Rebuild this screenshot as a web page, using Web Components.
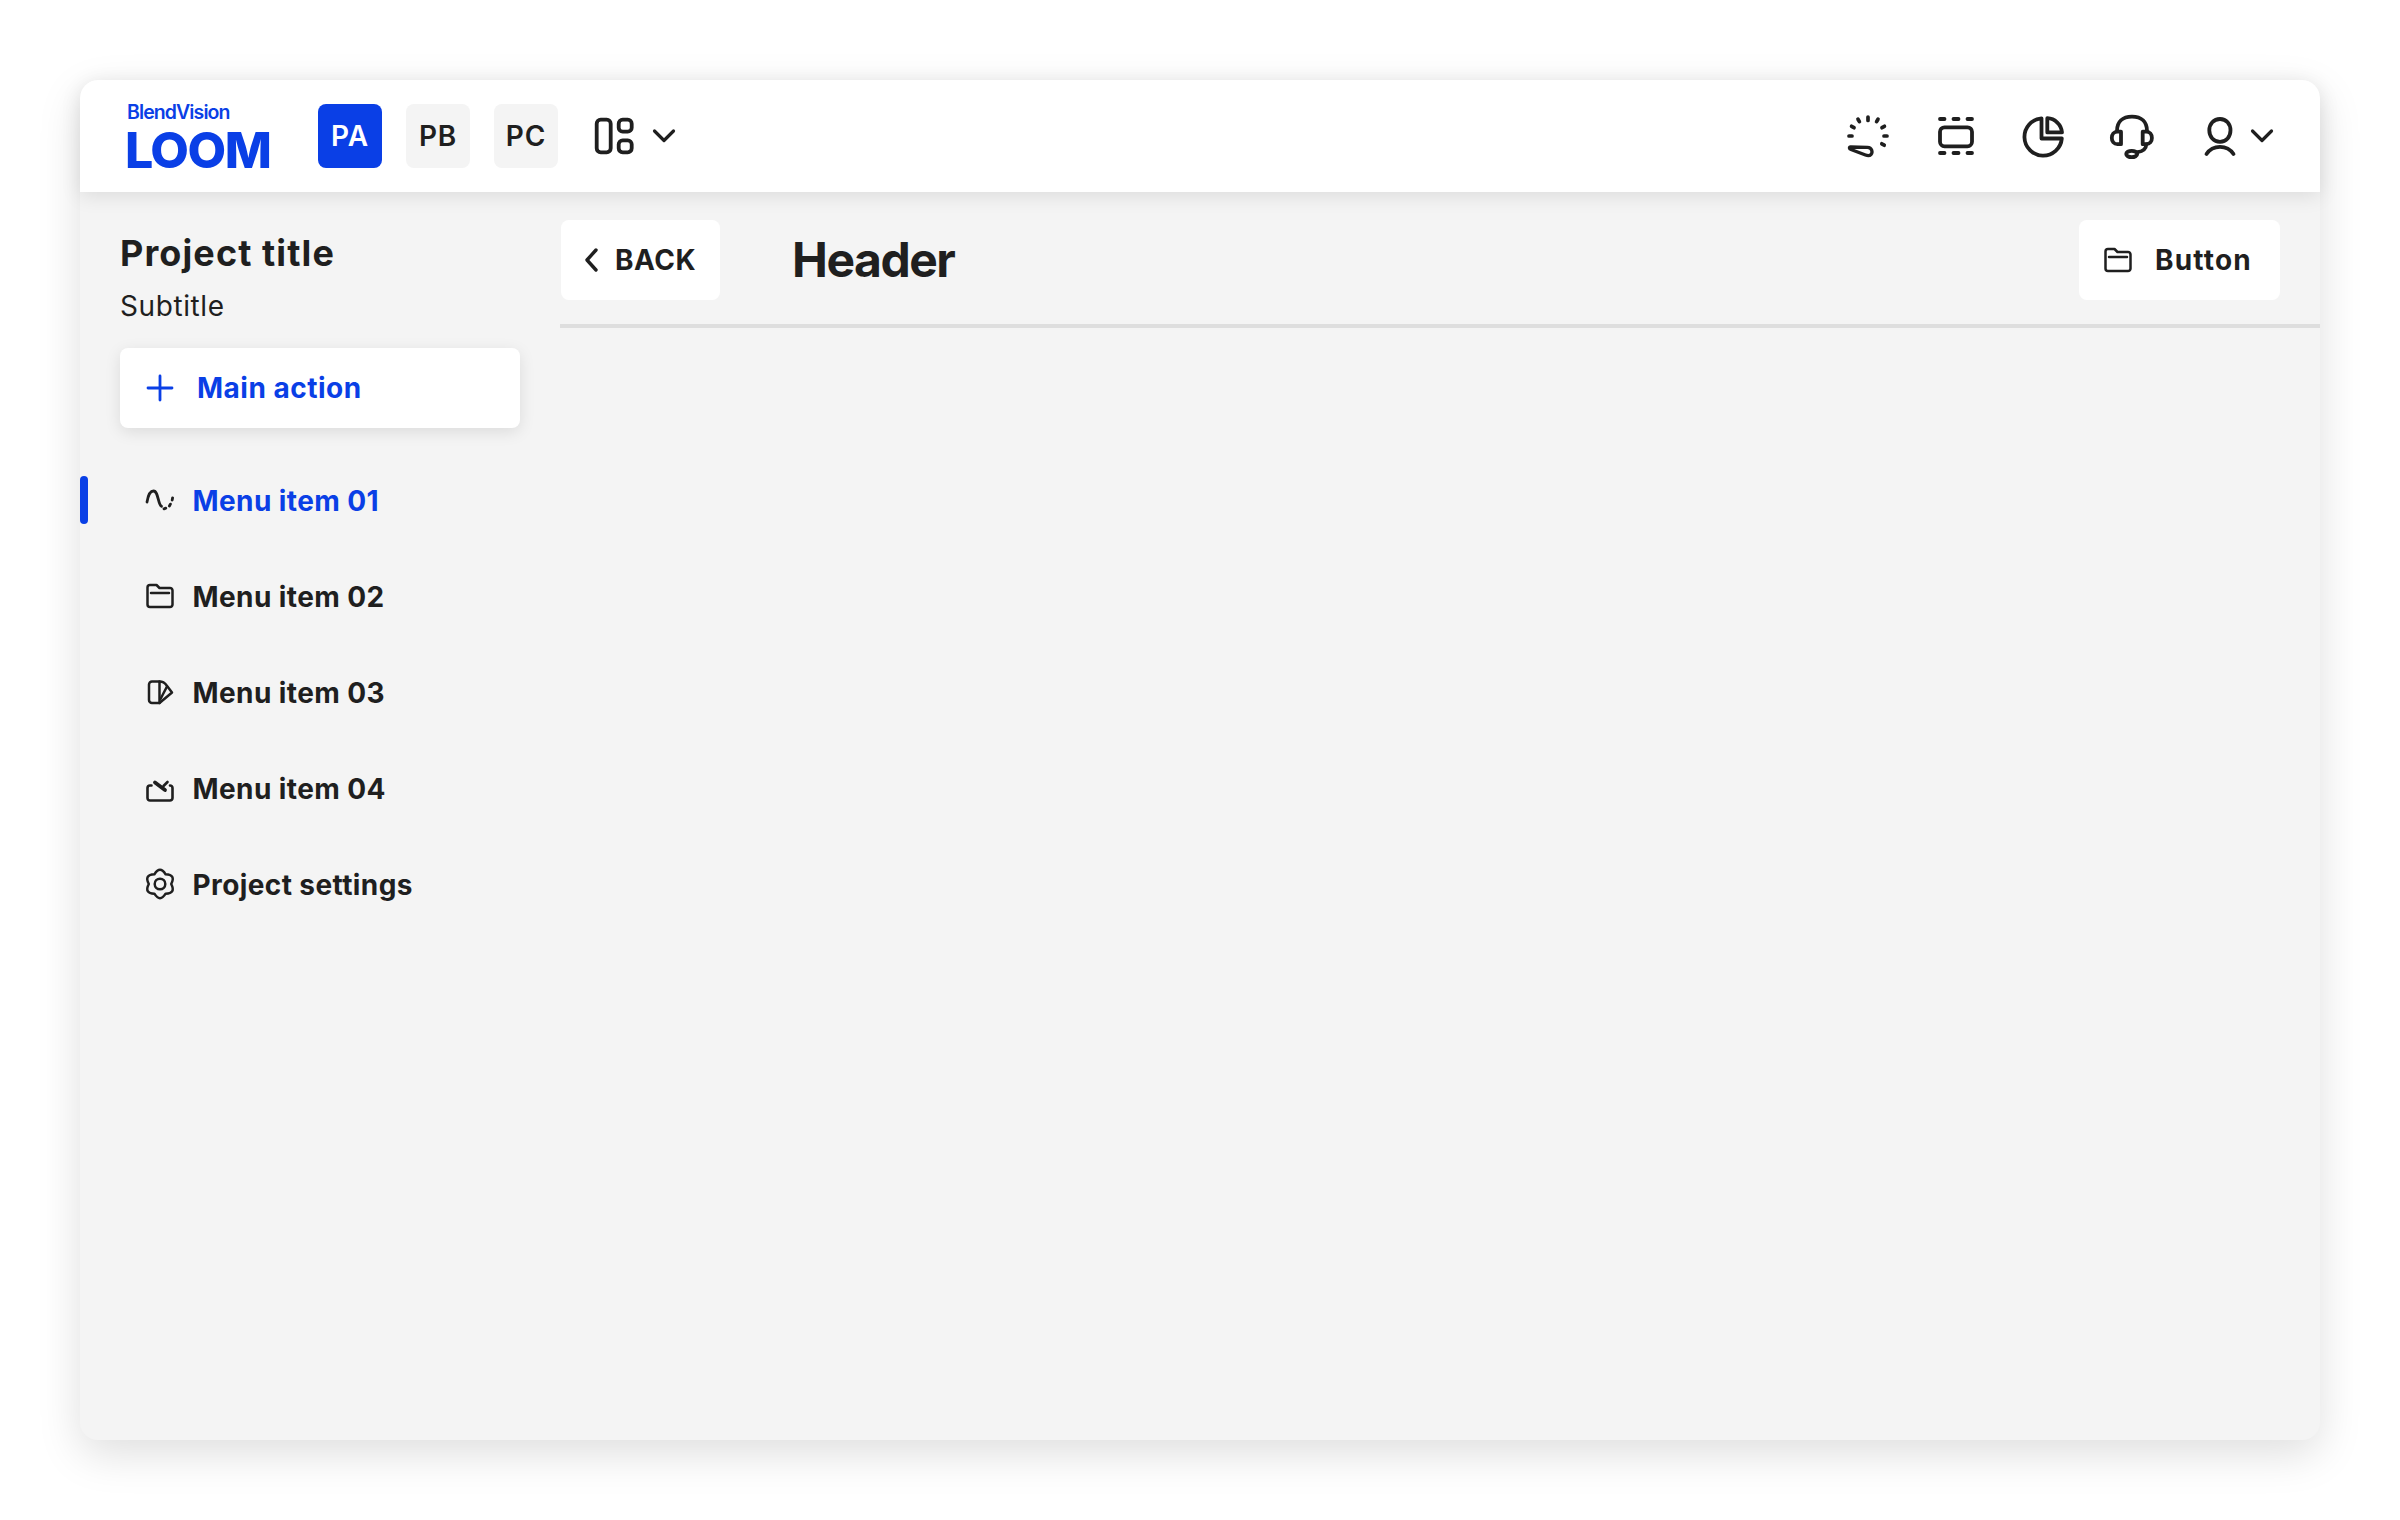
<!DOCTYPE html>
<html lang="en">
<head>
<meta charset="utf-8">
<title>BlendVision Loom</title>
<style>
  html, body { margin: 0; background: #fff; }
  body { padding: 80px; font-family: Inter, "Liberation Sans", sans-serif; color: #1f1f1f; }
</style>
</head>
<body>
<lm-app>
  <lm-topbar slot="top">
    <lm-logo slot="logo"></lm-logo>
    <lm-project slot="projects" active>PA</lm-project>
    <lm-project slot="projects">PB</lm-project>
    <lm-project slot="projects">PC</lm-project>
    <lm-icon slot="projects" name="layout" size="48" class="after"></lm-icon>
    <lm-icon slot="projects" name="chevron" size="24"></lm-icon>
    <lm-icon slot="tools" name="gauge" size="48"></lm-icon>
    <lm-icon slot="tools" name="frames" size="48"></lm-icon>
    <lm-icon slot="tools" name="pie" size="48"></lm-icon>
    <lm-icon slot="tools" name="headset" size="48"></lm-icon>
    <lm-icon slot="tools" name="user" size="48"></lm-icon>
    <lm-icon slot="end" name="chevron" size="24"></lm-icon>
  </lm-topbar>
  <lm-sidebar slot="side" heading="Project title" subtitle="Subtitle">
    <lm-main-action slot="action">Main action</lm-main-action>
    <lm-nav-item icon="wave" active>Menu item 01</lm-nav-item>
    <lm-nav-item icon="folder">Menu item 02</lm-nav-item>
    <lm-nav-item icon="fan">Menu item 03</lm-nav-item>
    <lm-nav-item icon="meter">Menu item 04</lm-nav-item>
    <lm-nav-item icon="gear">Project settings</lm-nav-item>
  </lm-sidebar>
  <lm-content slot="main">
    <lm-button slot="back" icon="back" kind="back">BACK</lm-button>
    <span slot="title">Header</span>
    <lm-button slot="actions" icon="folder">Button</lm-button>
  </lm-content>
</lm-app>

<script>
// scalloped outline for the settings gear
function gearPath() {
  const pt = (r, deg) => {
    const a = deg * Math.PI / 180;
    return (16 + r * Math.cos(a)).toFixed(2) + ' ' + (16 + r * Math.sin(a)).toFixed(2);
  };
  let d = 'M' + pt(11.2, -60);
  for (let i = 0; i < 6; i++) {
    d += 'Q' + pt(18.6, -30 + i * 60) + ' ' + pt(11.2, i * 60);
  }
  return d + 'Z';
}

const ICONS = {
  chevron: { box: 24, sw: 3.2, svg: '<path d="M2.500 7 12 16.500 21.500 7"/>' },
  back: { box: 32, sw: 3.4, svg: '<path d="M20 6 11 16l9 10"/>' },
  plus: { box: 32, sw: 2.8, svg: '<path d="M16 4v24M4 16h24"/>' },
  layout: { box: 48, sw: 3.8, svg: '<rect x="6.700" y="7.700" width="14" height="32.600" rx="4"/><rect x="28.700" y="7.700" width="13" height="12" rx="4"/><rect x="28.700" y="28.300" width="13" height="12" rx="4"/>' },
  gauge: { box: 48, sw: 3.7, svg: '<path d="M5 24h3M7.600 14.300l2.400 1.400M14 7.200l1.400 2.400M24 5v3.400M34 7.200l-1.400 2.400M40.400 14.300l-2.400 1.400M40 24h3M37.800 31.800l2.400 1.400"/><path stroke-width="3.300" d="M6.500 35l17 .3c4.500.2 5.500 4.700 3.500 7.200-1.500 1.500-3.500 1.300-5.500.5L7 37.500C5 36.700 5 35 6.500 35z"/>' },
  frames: { box: 48, sw: 3.8, svg: '<rect x="8" y="15.300" width="32" height="19" rx="4.500"/><path stroke-width="3.800" d="M8 7h4.500M21.500 7h5M35.500 7H40M8 41h4.500M21.500 41h5M35.500 41H40"/>' },
  pie: { box: 48, sw: 3.8, svg: '<path d="M21.500 6.300A18.700 18.700 0 1 0 41.800 26.500H21.500z"/><path d="M27.300 6.200A15.500 15.500 0 0 1 42 20.400H27.300z"/>' },
  headset: { box: 48, sw: 3.8, svg: '<path d="M9 19c0-9 5.500-14.300 15-14.300S39 10 39 19"/><path d="M9.500 19.700H13v12.500H9.500c-3.600 0-5.700-2.800-5.700-6.200s2.100-6.300 5.700-6.300zM34.700 19.700h3.500c3.600 0 5.700 2.900 5.700 6.300s-2.100 6.200-5.700 6.200h-3.500z"/><path d="M38.300 32.500c-.3 4.800-3 6.800-8.800 7.700"/><ellipse cx="23.700" cy="42" rx="5.500" ry="3.200"/>' },
  user: { box: 48, sw: 3.8, svg: '<path d="M24 7c6.300 0 10.500 4.800 10.500 11.300S30.300 29.800 24 29.800 13.300 24.800 13.300 18.300 17.700 7 24 7z"/><path d="M10.500 42c3-4.500 8-7.200 13.500-7.200s10.500 2.700 13.500 7.200"/>' },
  wave: { box: 32, sw: 2.8, svg: '<path d="M3 18c1-6 3.400-11 6.500-11 5 0 4.300 13.500 8 15.300"/><path d="M20 24.800l1.800-.6M25.400 22l1-1.900M28.200 16l.4-2.200"/>' },
  folder: { box: 32, sw: 2.5, svg: '<path d="M3.500 7.500A2.500 2.500 0 0 1 6 5h6.500l3 3H26a2.500 2.500 0 0 1 2.500 2.500v14A2.500 2.500 0 0 1 26 27H6a2.500 2.500 0 0 1-2.500-2.500z"/><path d="M7 13h18"/>' },
  fan: { box: 32, sw: 2.5, svg: '<path d="M8 5.500h7.500V27H8a3 3 0 0 1-3-3V8.500a3 3 0 0 1 3-3z"/><path d="M15.500 5.500c3.500 0 5.500 1.500 7 3.700l5.500 7.300-12.500 10.500"/><path d="M16.500 23l6.500-12.500"/>' },
  meter: { box: 32, sw: 2.6, svg: '<path d="M7.500 13.500H6A2.500 2.500 0 0 0 3.500 16v10A2.500 2.500 0 0 0 6 28.500h20a2.500 2.500 0 0 0 2.500-2.500V16a2.500 2.500 0 0 0-2.500-2.500"/><path stroke-width="3.800" d="M11 10.500l10 7.500"/><path stroke-width="2.600" d="M23.500 10l-4 4"/>' },
  gear: { box: 32, sw: 2.5, svg: '<path d="' + gearPath() + '"/><circle cx="16" cy="16" r="5.300"/>' }
};

const iconTpl = document.createElement('template');
iconTpl.innerHTML = `
  <style>
    :host { display: inline-flex; flex: none; }
    svg { display: block; fill: none; stroke: currentColor; stroke-linecap: round; stroke-linejoin: round; }
  </style>
  <svg aria-hidden="true"></svg>`;

class LmIcon extends HTMLElement {
  connectedCallback() {
    if (!this.shadowRoot) {
      this.attachShadow({ mode: 'open' }).appendChild(iconTpl.content.cloneNode(true));
    }
    const ico = ICONS[this.getAttribute('name')];
    if (!ico) return;
    const size = this.getAttribute('size') || ico.box;
    const svg = this.shadowRoot.querySelector('svg');
    svg.setAttribute('viewBox', `0 0 ${ico.box} ${ico.box}`);
    svg.setAttribute('width', size);
    svg.setAttribute('height', size);
    svg.setAttribute('stroke-width', ico.sw);
    svg.innerHTML = ico.svg;
  }
}
customElements.define('lm-icon', LmIcon);

class LmApp extends HTMLElement {
  constructor() {
    super();
    this.attachShadow({ mode: 'open' }).innerHTML = `
      <style>
        :host {
          display: flex; flex-direction: column;
          width: 2240px; height: 1360px;
          background: #f4f4f4; border-radius: 18px;
          box-shadow: 0 14px 44px rgba(0,0,0,.13);
        }
        .body { flex: 1; display: flex; min-height: 0; }
      </style>
      <slot name="top"></slot>
      <div class="body"><slot name="side"></slot><slot name="main"></slot></div>`;
  }
}
customElements.define('lm-app', LmApp);

class LmLogo extends HTMLElement {
  constructor() {
    super();
    this.attachShadow({ mode: 'open' }).innerHTML = `
      <style>
        :host { display: flex; flex-direction: column; width: 144px; color: #0a3fe6; font-family: Inter, sans-serif; }
        .a { font-size: 19.500px; line-height: 20px; font-weight: 600; letter-spacing: -.9px; margin-top: 2px; }
        .b { font-size: 50px; line-height: 44px; margin-top: 6px; font-weight: 800; letter-spacing: -1.500px; margin-left: -2px; }
      </style>
      <span class="a">BlendVision</span>
      <span class="b">LOOM</span>`;
  }
}
customElements.define('lm-logo', LmLogo);

class LmProject extends HTMLElement {
  constructor() {
    super();
    this.attachShadow({ mode: 'open' }).innerHTML = `
      <style>
        :host {
          display: flex; align-items: center; justify-content: center;
          width: 64px; height: 64px; border-radius: 8px;
          background: #f4f4f4; color: #1f1f1f;
          font-size: 28px; font-weight: 600; letter-spacing: .8px;
        }
        :host([active]) { background: #0a3fe6; color: #fff; }
      </style>
      <slot></slot>`;
  }
}
customElements.define('lm-project', LmProject);

class LmTopbar extends HTMLElement {
  constructor() {
    super();
    this.attachShadow({ mode: 'open' }).innerHTML = `
      <style>
        :host {
          display: flex; align-items: center; flex: none;
          height: 112px; padding: 0 46px 0 47px; box-sizing: border-box;
          background: #fff; border-radius: 18px 18px 0 0;
          box-shadow: 0 4px 20px rgba(0,0,0,.1);
          position: relative; z-index: 1;
        }
        .logo { margin-right: 47px; display: flex; }
        .projects { display: flex; align-items: center; gap: 24px; }
        .tools { margin-left: auto; display: flex; align-items: center; gap: 40px; }
        .end { display: flex; align-items: center; margin-left: 6px; }
        ::slotted(.after) { margin-left: 8px; margin-right: -10px; }
      </style>
      <div class="logo"><slot name="logo"></slot></div>
      <div class="projects"><slot name="projects"></slot></div>
      <div class="tools"><slot name="tools"></slot></div>
      <div class="end"><slot name="end"></slot></div>`;
  }
}
customElements.define('lm-topbar', LmTopbar);

class LmMainAction extends HTMLElement {
  constructor() {
    super();
    this.attachShadow({ mode: 'open' }).innerHTML = `
      <style>
        :host {
          display: flex; align-items: center; gap: 21px;
          width: 400px; height: 80px; padding-left: 24px; box-sizing: border-box;
          background: #fff; border-radius: 8px; color: #0a3fe6;
          box-shadow: 0 4px 16px rgba(0,0,0,.1);
          font-size: 28px; font-weight: 700; letter-spacing: .5px;
        }
      </style>
      <lm-icon name="plus" size="32"></lm-icon><slot></slot>`;
  }
}
customElements.define('lm-main-action', LmMainAction);

class LmNavItem extends HTMLElement {
  constructor() {
    super();
    this.attachShadow({ mode: 'open' }).innerHTML = `
      <style>
        :host {
          display: flex; align-items: center; gap: 16.500px; position: relative;
          height: 96px; padding-left: 64px;
          color: #1f1f1f; font-size: 28px; font-weight: 700; letter-spacing: .4px;
        }
        :host([active]) { color: #0a3fe6; }
        :host([active]) lm-icon { color: #1f1f1f; }
        :host([active])::before {
          content: ""; position: absolute; left: 0; top: 24px;
          width: 8px; height: 48px; border-radius: 4px; background: #0a3fe6;
        }
        span { padding-top: 1px; }
      </style>
      <lm-icon size="32" name="${this.getAttribute('icon')}"></lm-icon><span><slot></slot></span>`;
  }
}
customElements.define('lm-nav-item', LmNavItem);

class LmSidebar extends HTMLElement {
  constructor() {
    super();
    this.attachShadow({ mode: 'open' }).innerHTML = `
      <style>
        :host { display: block; width: 480px; flex: none; box-sizing: border-box; padding-top: 39px; }
        .head { padding-left: 40px; }
        h1 { margin: 0; font-size: 36px; line-height: 44px; font-weight: 700; letter-spacing: 1.100px; }
        p { margin: 11px 0 22px; font-size: 28px; line-height: 40px; font-weight: 400; letter-spacing: .6px; }
        nav { margin-top: 24px; }
      </style>
      <div class="head">
        <h1></h1><p></p>
        <slot name="action"></slot>
      </div>
      <nav><slot></slot></nav>`;
    this.shadowRoot.querySelector('h1').textContent = this.getAttribute('heading');
    this.shadowRoot.querySelector('p').textContent = this.getAttribute('subtitle');
  }
}
customElements.define('lm-sidebar', LmSidebar);

class LmButton extends HTMLElement {
  constructor() {
    super();
    this.attachShadow({ mode: 'open' }).innerHTML = `
      <style>
        :host {
          display: flex; align-items: center; gap: 21px;
          height: 80px; padding: 0 28px 0 23px; box-sizing: border-box;
          background: #fff; border-radius: 8px; color: #1f1f1f;
          font-size: 28px; font-weight: 700; letter-spacing: 1.200px;
        }
        :host([kind="back"]) { gap: 7px; padding: 0 24px 0 15px; letter-spacing: .5px; }
      </style>
      <lm-icon size="32" name="${this.getAttribute('icon')}"></lm-icon><slot></slot>`;
  }
}
customElements.define('lm-button', LmButton);

class LmContent extends HTMLElement {
  constructor() {
    super();
    this.attachShadow({ mode: 'open' }).innerHTML = `
      <style>
        :host { display: block; flex: 1; min-width: 0; padding-top: 28px; }
        header {
          display: flex; align-items: center;
          padding: 0 40px 24px 1px;
          border-bottom: 4px solid #dedede;
        }
        .title { margin-left: 72px; margin-bottom: 2px; font-size: 48px; font-weight: 700; letter-spacing: -1.500px; }
        .actions { margin-left: auto; display: flex; }
      </style>
      <header>
        <slot name="back"></slot>
        <div class="title"><slot name="title"></slot></div>
        <div class="actions"><slot name="actions"></slot></div>
      </header>`;
  }
}
customElements.define('lm-content', LmContent);
</script>
</body>
</html>
